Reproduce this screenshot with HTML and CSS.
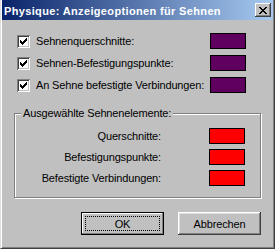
FILE: index.html
```html
<!DOCTYPE html>
<html lang="de">
<head>
    <meta charset="UTF-8">
    <title>Physique: Anzeigeoptionen für Sehnen</title>
    <link rel="stylesheet" href="styles.css">
</head>
<body>

<div class="window">
    <div class="titlebar">
        <span class="title">Physique: Anzeigeoptionen für Sehnen</span>
        <span class="close">
            <svg width="8" height="7" viewBox="0 0 8 7" shape-rendering="crispEdges">
                <path d="M0 0h2v1H0zM6 0h2v1H6zM1 1h2v1H1zM5 1h2v1H5zM2 2h4v1H2zM3 3h2v1H3zM2 4h4v1H2zM1 5h2v1H1zM5 5h2v1H5zM0 6h2v1H0zM6 6h2v1H6z" fill="#000"/>
            </svg>
        </span>
    </div>

    <div class="content">
        <!-- Anzeigeoptionen -->
        <div class="row">
            <label class="check"><span class="box"><svg width="13" height="13" viewBox="0 0 13 13" shape-rendering="crispEdges"><path d="M3 5h1v3H3zM4 6h1v3H4zM5 7h1v3H5zM6 6h1v3H6zM7 5h1v3H7zM8 4h1v3H8zM9 3h1v3H9z" fill="#000"/></svg></span>Sehnenquerschnitte:</label>
            <span class="swatch purple"></span>
        </div>
        <div class="row">
            <label class="check"><span class="box"><svg width="13" height="13" viewBox="0 0 13 13" shape-rendering="crispEdges"><path d="M3 5h1v3H3zM4 6h1v3H4zM5 7h1v3H5zM6 6h1v3H6zM7 5h1v3H7zM8 4h1v3H8zM9 3h1v3H9z" fill="#000"/></svg></span>Sehnen-Befestigungspunkte:</label>
            <span class="swatch purple"></span>
        </div>
        <div class="row">
            <label class="check"><span class="box"><svg width="13" height="13" viewBox="0 0 13 13" shape-rendering="crispEdges"><path d="M3 5h1v3H3zM4 6h1v3H4zM5 7h1v3H5zM6 6h1v3H6zM7 5h1v3H7zM8 4h1v3H8zM9 3h1v3H9z" fill="#000"/></svg></span>An Sehne befestigte Verbindungen:</label>
            <span class="swatch purple"></span>
        </div>

        <!-- Ausgewählte Elemente -->
        <fieldset class="group">
            <legend>Ausgewählte Sehnenelemente:</legend>
            <div class="group-row">
                <span class="label">Querschnitte:</span>
                <span class="swatch red"></span>
            </div>
            <div class="group-row">
                <span class="label">Befestigungspunkte:</span>
                <span class="swatch red"></span>
            </div>
            <div class="group-row">
                <span class="label">Befestigte Verbindungen:</span>
                <span class="swatch red"></span>
            </div>
        </fieldset>

        <div class="buttons">
            <button class="btn default"><span class="focus">OK</span></button>
            <button class="btn">Abbrechen</button>
        </div>
    </div>
</div>

</body>
</html>
```

FILE: styles.css
```css
body {
    margin: 0;
    background: #c0c0c0;
    font-family: "Liberation Sans", Arial, sans-serif;
    font-size: 11px;
    letter-spacing: -0.15px;
    color: #000;
}
.window {
    width: 275px;
    height: 249px;
    box-sizing: border-box;
    border-left: 1px solid #dfdfdf;
    border-right: 1px solid #404040;
    border-bottom: 1px solid #404040;
    box-shadow: inset 1px 0 #fff, inset -1px -1px #808080;
    padding: 0 1px 1px 1px;
}
.titlebar {
    height: 20px;
    display: flex;
    align-items: center;
    justify-content: space-between;
    padding: 0 2px 0 2px;
    background: linear-gradient(to right, #0a246a, #a6caf0);
}
.title {
    color: #fff;
    font-weight: bold;
    font-size: 11px;
    letter-spacing: 0.35px;
    padding-top: 1px;
}
.close {
    width: 16px;
    height: 14px;
    box-sizing: border-box;
    display: flex;
    align-items: center;
    justify-content: center;
    background: #c0c0c0;
    box-shadow: inset -1px -1px #404040, inset 1px 1px #fff, inset -2px -2px #808080;
}
.content {
    padding: 10px 27px 0 15px;
}
.row {
    height: 22px;
    display: flex;
    align-items: center;
    justify-content: space-between;
}
.check {
    display: flex;
    align-items: center;
    gap: 6px;
}
.box {
    width: 13px;
    height: 13px;
    display: block;
    background: #fff;
    box-shadow: inset 1px 1px #808080, inset -1px -1px #fff, inset 2px 2px #404040, inset -2px -2px #c0c0c0;
}
.box svg {
    display: block;
}
.swatch {
    width: 36px;
    height: 16px;
    box-sizing: border-box;
    border: 1px solid #000;
    display: block;
}
.purple {
    background: #5f005f;
}
.red {
    background: #ff0000;
}
.group {
    margin: 11px -15px 0 -3px;
    padding: 5px 15px 9px 0;
    border: 1px solid #808080;
    box-shadow: 1px 1px 0 #fff, inset 1px 1px 0 #fff;
}
.group legend {
    margin-left: 6px;
    padding: 0 2px;
    line-height: 13px;
    background: #c0c0c0;
}
.group-row {
    height: 21px;
    display: flex;
    align-items: center;
    justify-content: flex-end;
}
.group-row .label {
    margin-right: 48px;
}
.buttons {
    display: flex;
    justify-content: flex-end;
    gap: 14px;
    margin: 14px -15px 0 0;
}
.btn {
    width: 83px;
    height: 23px;
    padding: 0;
    border: none;
    background: #c0c0c0;
    font-family: "Liberation Sans", Arial, sans-serif;
    font-size: 11px;
    letter-spacing: -0.15px;
    color: #000;
    box-shadow: inset -1px -1px #404040, inset 1px 1px #fff, inset -2px -2px #808080, inset 2px 2px #dfdfdf;
}
.btn.default {
    border: 1px solid #000;
    box-shadow: inset -1px -1px #808080, inset 1px 1px #fff;
    padding: 3px;
}
.focus {
    display: flex;
    align-items: center;
    justify-content: center;
    height: 100%;
    box-sizing: border-box;
    border: 1px dotted #000;
}
```
